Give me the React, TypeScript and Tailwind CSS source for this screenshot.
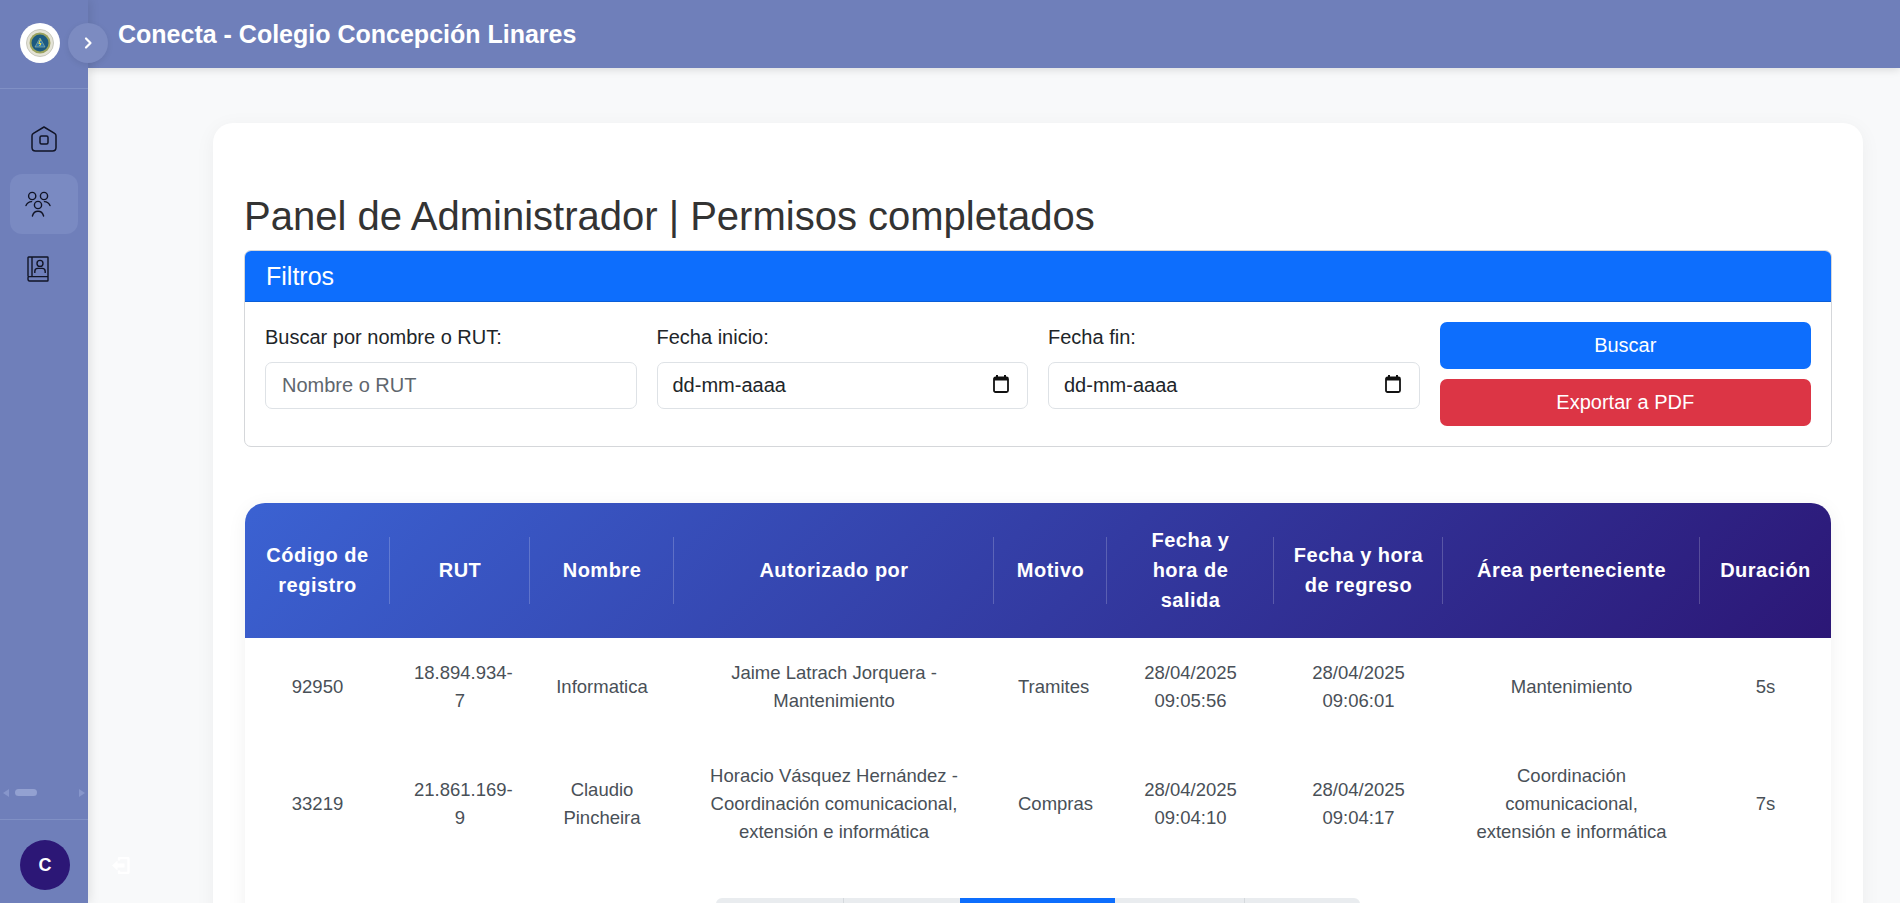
import React from "react";

const font = "font-['Liberation_Sans',Arial,sans-serif]";

const Home = () => (
  <svg width="26" height="26" viewBox="0 0 26 26" fill="none" stroke="#111426" strokeWidth="1.5" strokeLinejoin="round">
    <path d="M13 1 L23.6 7.4 Q25 8.2 25 9.8 V21.5 Q25 25 21.5 25 H4.5 Q1 25 1 21.5 V9.8 Q1 8.2 2.4 7.4 Z" />
    <rect x="9" y="10" width="8" height="8" rx="1.5" />
  </svg>
);

const People = () => (
  <svg width="26" height="26" viewBox="0 0 26 26" fill="none" stroke="#111426" strokeWidth="1.4" strokeLinecap="round">
    <circle cx="7.2" cy="5" r="3.6" />
    <circle cx="19" cy="5" r="3.6" />
    <circle cx="13" cy="14" r="3.6" />
    <path d="M1 14.5 Q2.6 10.8 6.6 10.6" />
    <path d="M25 14.5 Q23.4 10.8 19.4 10.6" />
    <path d="M7.4 25 Q8.6 20.2 13 20.2 Q17.4 20.2 18.6 25" />
  </svg>
);

const Book = () => (
  <svg width="22" height="26" viewBox="0 0 22 26" fill="none" stroke="#111426" strokeWidth="1.4" strokeLinejoin="round">
    <path d="M1 20.5 V1.6 Q1 1 1.6 1 H20.4 Q21 1 21 1.6 V24.4 Q21 25 20.4 25 H2.6 Q1 25 1 23 V21.6 Q1 20.6 2.6 20.6 H21" />
    <path d="M5 1 V20.5" />
    <circle cx="13" cy="7.4" r="3" />
    <path d="M7.8 17 V15.4 Q7.8 12.4 10.8 12.4 H15.2 Q18.2 12.4 18.2 15.4 V17" />
  </svg>
);

const Calendar = () => (
  <svg className="-mt-[2px]" width="16" height="18" viewBox="0 0 16 18" fill="none">
    <path d="M4 0 V3 M12 0 V3" stroke="#111" strokeWidth="2" />
    <rect x="1" y="2.5" width="14" height="14.5" rx="1.5" stroke="#111" strokeWidth="1.8" />
    <rect x="1" y="2.5" width="14" height="3" fill="#111" />
  </svg>
);

const Logo = () => (
  <svg width="40" height="40" viewBox="0 0 40 40">
    <circle cx="20" cy="20" r="20" fill="#fff" />
    <circle cx="20" cy="20" r="13.5" fill="#e4e3d6" stroke="#c8c8be" strokeWidth="1" />
    <circle cx="20" cy="20" r="10.5" fill="#9aa35f" />
    <circle cx="20" cy="20" r="8.5" fill="#1c5a80" />
    <path d="M20 15 L25 24 H15 Z" fill="#2b79b0" stroke="#8fb0a0" strokeWidth="0.7" />
    <path d="M20.5 16.5 L18.8 20.5 H21 L19.6 23" stroke="#f2e24a" strokeWidth="1" fill="none" />
  </svg>
);

const columns = [
  { w: "w-[145px]", label: "Código de\nregistro" },
  { w: "w-[140px]", label: "RUT" },
  { w: "w-[144px]", label: "Nombre" },
  { w: "w-[320px]", label: "Autorizado por" },
  { w: "w-[113px]", label: "Motivo" },
  { w: "w-[167px]", label: "Fecha y\nhora de\nsalida" },
  { w: "w-[169px]", label: "Fecha y hora\nde regreso" },
  { w: "w-[257px]", label: "Área perteneciente" },
  { w: "w-[131px]", label: "Duración" },
];

const rows = [
  ["92950", "18.894.934-7", "Informatica", "Jaime Latrach Jorquera - Mantenimiento", "Tramites", "28/04/2025 09:05:56", "28/04/2025 09:06:01", "Mantenimiento", "5s"],
  ["33219", "21.861.169-9", "Claudio Pincheira", "Horacio Vásquez Hernández - Coordinación comunicacional, extensión e informática", "Compras", "28/04/2025 09:04:10", "28/04/2025 09:04:17", "Coordinación comunicacional, extensión e informática", "7s"],
];

const inputBox = "h-[47px] w-full rounded-[7px] border border-[#dee2e6] bg-white text-[20px] pb-[2px] flex items-center";
const labelCls = "block text-[20px] leading-[26px] mb-[12px] mt-[2px]";

export default function App() {
  return (
    <div className={`${font} flex h-screen w-full overflow-hidden bg-[#f8f9fa] relative`}>
      <aside className="w-[88px] shrink-0 bg-[#6f7fba] flex flex-col shadow-[2px_0_10px_rgba(0,0,0,0.1)] z-20">
        <div className="h-[89px] shrink-0 border-b border-[#8090c5] pl-5 pt-[23px]">
          <Logo />
        </div>
        <nav className="flex-1 flex flex-col items-center gap-[5px] pt-[20px] px-[10px]">
          <div className="h-[60px] w-full shrink-0 flex items-center justify-center"><Home /></div>
          <div className="h-[60px] w-full shrink-0 flex items-center justify-center rounded-[12px] bg-[#7a8ac2] pr-3"><People /></div>
          <div className="h-[60px] w-full shrink-0 flex items-center justify-center pr-3"><Book /></div>
        </nav>
        <div className="h-[53px] shrink-0 flex items-center pl-[3px] pr-[3px] gap-[6px]">
          <span className="w-0 h-0 border-y-[4px] border-y-transparent border-r-[6px] border-r-[#8796cb]" />
          <span className="w-[22px] h-[7px] rounded-full bg-[#93a1d1]" />
          <span className="flex-1" />
          <span className="w-0 h-0 border-y-[4px] border-y-transparent border-l-[6px] border-l-[#8796cb]" />
        </div>
        <div className="h-[84px] shrink-0 border-t border-[#8090c5] pl-5 pt-[20px]">
          <div className="w-[50px] h-[50px] rounded-full bg-[#2c1776] flex items-center justify-center text-white font-bold text-[18px]">C</div>
        </div>
      </aside>

      <button className="absolute left-[68px] top-[23px] z-30 w-10 h-10 rounded-full bg-[#7c8bc1] shadow-[0_2px_6px_rgba(0,0,0,0.08)] flex items-center justify-center">
        <svg width="10" height="14" viewBox="0 0 10 14" fill="none" stroke="#fff" strokeWidth="2.2" strokeLinecap="round" strokeLinejoin="round">
          <path d="M3 2.5 L7.5 7 L3 11.5" />
        </svg>
      </button>

      <svg className="absolute left-[112px] top-[857px] z-30" width="18" height="17" viewBox="0 0 18 17" fill="none">
        <path d="M7 3.5 V1.5 Q7 1 7.5 1 H15.5 Q16.5 1 16.5 2 V15 Q16.5 16 15.5 16 H7.5 Q7 16 7 15.5 V13.5" stroke="#fff" strokeWidth="2.4" />
        <path d="M0 8.5 L5.5 3.5 V6.5 H12.5 V10.5 H5.5 V13.5 Z" fill="#fff" />
      </svg>

      <div className="flex-1 min-w-0 flex flex-col">
        <header className="h-[68px] shrink-0 bg-[#6f7fba] shadow-[0_2px_8px_rgba(0,0,0,0.12)] pl-[30px] pt-[18px] z-10">
          <h1 className="text-white font-bold text-[25px] leading-[32px]">Conecta - Colegio Concepción Linares</h1>
        </header>

        <main className="flex-1 min-h-0 overflow-hidden pt-[55px] pl-[125px] pr-[37px]">
          <div className="rounded-[20px] bg-white shadow-[0_4px_20px_rgba(0,0,0,0.05)] px-[31px] pt-[66px] pb-8 h-[1000px]">
            <h2 className="text-[40px] leading-[48px] text-[#333] mb-[10px] mt-[3px]">Panel de Administrador | Permisos completados</h2>

            <section className="rounded-[7px] border border-[#d5d7da] overflow-hidden">
              <div className="h-[51px] bg-[#0d6efd] border-b border-[#0b5ed7] flex items-center px-[21px] pt-[2px] text-white text-[25px]">Filtros</div>
              <div className="grid grid-cols-4 gap-x-5 px-5 pt-[20px] pb-[20px] text-[#212529]">
                <div>
                  <label className={labelCls}>Buscar por nombre o RUT:</label>
                  <div className={`${inputBox} px-4 text-[#5f666d]`}>Nombre o RUT</div>
                </div>
                <div>
                  <label className={labelCls}>Fecha inicio:</label>
                  <div className={`${inputBox} justify-between pl-[15px] pr-[18px]`}>dd-mm-aaaa<Calendar /></div>
                </div>
                <div>
                  <label className={labelCls}>Fecha fin:</label>
                  <div className={`${inputBox} justify-between pl-[15px] pr-[18px]`}>dd-mm-aaaa<Calendar /></div>
                </div>
                <div className="flex flex-col gap-[10px]">
                  <button className="h-[47px] rounded-[7px] bg-[#0d6efd] text-white text-[20px] pb-[2px]">Buscar</button>
                  <button className="h-[47px] rounded-[7px] bg-[#dc3545] text-white text-[20px] pb-[2px]">Exportar a PDF</button>
                </div>
              </div>
            </section>

            <div className="mt-[56px] mx-px rounded-[20px] shadow-[0_4px_20px_rgba(0,0,0,0.06)] overflow-hidden">
              <table className="w-full table-fixed border-collapse">
                <colgroup>
                  {columns.map((c) => <col key={c.label} className={c.w} />)}
                </colgroup>
                <thead>
                  <tr className="h-[135px] bg-[linear-gradient(135deg,#3b62d2,#2c1776)]">
                    {columns.map((c, i) => (
                      <th key={c.label} className="relative px-2 pb-[2px] text-white font-bold text-[20px] leading-[30px] tracking-[0.5px] text-center whitespace-pre-line">
                        {c.label}
                        {i < columns.length - 1 && <span className="absolute right-0 top-[34px] h-[67px] w-px bg-white/20" />}
                      </th>
                    ))}
                  </tr>
                </thead>
                <tbody>
                  {rows.map((r, i) => (
                    <tr key={r[0]} className={i === 0 ? "h-[98px]" : "h-[135px]"}>
                      {r.map((v, j) => (
                        <td key={j} className="px-6 text-center text-[18.5px] leading-[28px] text-[#495057]">{v}</td>
                      ))}
                    </tr>
                  ))}
                </tbody>
              </table>
              <div className="flex justify-center pt-[27px]">
                <div className="w-[644px] h-[40px] rounded-[6px] bg-[#e9ecef] flex overflow-hidden">
                  <div className="w-[128px] border-r border-[#d5d9dd]" />
                  <div className="w-[116px]" />
                  <div className="w-[155px] bg-[#0d6efd]" />
                  <div className="w-[130px] border-r border-[#d5d9dd]" />
                  <div className="flex-1" />
                </div>
              </div>
            </div>
          </div>
        </main>
      </div>
    </div>
  );
}
